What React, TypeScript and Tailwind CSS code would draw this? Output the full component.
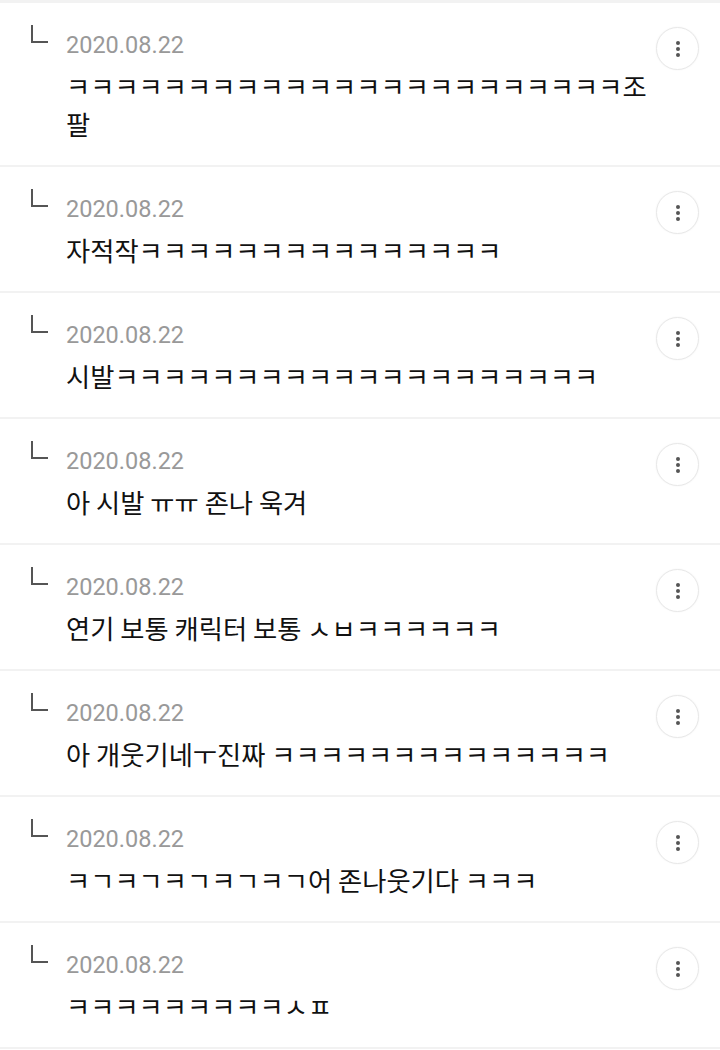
import React from "react";

const replies = [
  "ㅋㅋㅋㅋㅋㅋㅋㅋㅋㅋㅋㅋㅋㅋㅋㅋㅋㅋㅋㅋㅋㅋㅋ조팔",
  "자적작ㅋㅋㅋㅋㅋㅋㅋㅋㅋㅋㅋㅋㅋㅋㅋ",
  "시발ㅋㅋㅋㅋㅋㅋㅋㅋㅋㅋㅋㅋㅋㅋㅋㅋㅋㅋㅋㅋ",
  "아 시발 ㅠㅠ 존나 욱겨",
  "연기 보통 캐릭터 보통 ㅅㅂㅋㅋㅋㅋㅋㅋ",
  "아 개웃기네ㅜ진짜 ㅋㅋㅋㅋㅋㅋㅋㅋㅋㅋㅋㅋㅋㅋ",
  "ㅋㄱㅋㄱㅋㄱㅋㄱㅋㄱ어 존나웃기다 ㅋㅋㅋ",
  "ㅋㅋㅋㅋㅋㅋㅋㅋㅋㅅㅍ",
];

function ReplyMark() {
  return (
    <svg width="18" height="18" viewBox="0 0 18 18" className="shrink-0">
      <path d="M2 0 V17 H18" fill="none" stroke="#555" strokeWidth="2" />
    </svg>
  );
}

function MoreButton() {
  return (
    <button className="mt-[2px] w-[43px] h-[43px] shrink-0 rounded-full border border-[#e8e8e8] shadow-[0_0_2px_rgba(0,0,0,0.06)] flex flex-col items-center justify-center gap-[2px] bg-white">
      <span className="w-[4px] h-[4px] rounded-full bg-[#555]" />
      <span className="w-[4px] h-[4px] rounded-full bg-[#555]" />
      <span className="w-[4px] h-[4px] rounded-full bg-[#555]" />
    </button>
  );
}

export default function App() {
  return (
    <div
      className="bg-white w-[720px] min-h-[1050px] border-t-[3px] border-[#f2f2f2]"
      style={{ fontFamily: "Roboto, 'Noto Sans CJK KR', sans-serif" }}
    >
      {replies.map((text, i) => (
        <div
          key={i}
          className="flex items-start pl-[30px] pr-[21px] pt-[22px] pb-[22px] border-b-2 border-[#f2f2f2]"
        >
          <ReplyMark />
          <div className="ml-[18px] mt-[5px] flex-1 min-w-0 mr-[9px]">
            <div className="text-[23.5px] leading-[30px] text-[#999]">2020.08.22</div>
            <p
              className="mt-[7px] text-[26.3px] leading-[38px] text-[#111] break-all"
              style={{ fontFamily: "'Noto Sans CJK KR', sans-serif" }}
            >
              {text}
            </p>
          </div>
          <MoreButton />
        </div>
      ))}
    </div>
  );
}
